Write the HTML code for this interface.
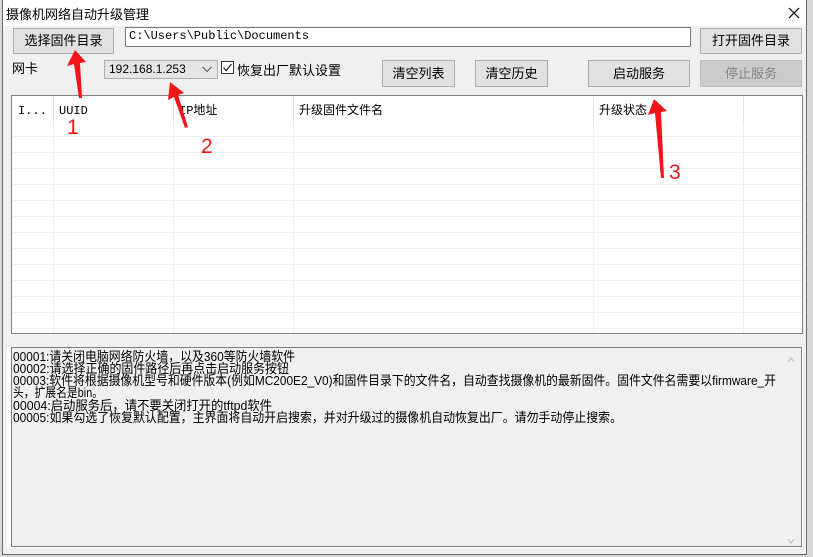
<!DOCTYPE html><html><head><meta charset="utf-8"><style>
body{margin:0;width:813px;height:557px;background:#d8d8d8;position:relative;overflow:hidden;font-family:"Liberation Sans","Noto Sans CJK SC",sans-serif;font-size:12px;color:#000}
.a{position:absolute}
.win{left:2px;top:0;width:805px;height:555px;background:#f0f0f0;border:1px solid #6a6a6a;border-top:none;box-sizing:border-box}
.btn{position:absolute;background:#e1e1e1;border:1px solid #adadad;box-sizing:border-box;text-align:center;font-size:13px;line-height:24px}
.mono{font-family:"Liberation Mono","Noto Sans CJK SC",monospace}
</style></head><body>
<div class="a win"></div>
<div class="a" style="left:3px;top:0;width:803px;height:26px;background:#fff"></div>
<div class="a" style="left:6px;top:4px;font-size:13px">摄像机网络自动升级管理</div>
<svg class="a" style="left:788px;top:7px" width="12" height="12"><path d="M1 1L11 11M11 1L1 11" stroke="#000" stroke-width="1.2"/></svg>
<div class="btn" style="left:13px;top:28px;width:101px;height:26px">选择固件目录</div>
<div class="a mono" style="left:125px;top:27px;width:566px;height:20px;background:#fff;border:1px solid #7a7a7a;box-sizing:border-box;padding-left:3px;line-height:17px;font-size:12px">C:\Users\Public\Documents</div>
<div class="btn" style="left:700px;top:28px;width:102px;height:26px">打开固件目录</div>
<div class="a" style="left:12px;top:58px;font-size:13px">网卡</div>
<div class="a" style="left:104px;top:60px;width:114px;height:19px;background:#e5e5e5;border:1px solid #adadad;box-sizing:border-box;font-size:12px;line-height:17px;padding-left:4px">192.168.1.253</div>
<svg class="a" style="left:202px;top:66px" width="10" height="7"><path d="M0.5 1L5 5.5L9.5 1" stroke="#555" fill="none"/></svg>
<div class="a" style="left:221px;top:61px;width:13px;height:13px;background:#fff;border:1px solid #333;box-sizing:border-box"></div>
<svg class="a" style="left:222px;top:62px" width="11" height="11"><path d="M1.5 5.5L4.2 8.5L9.5 2" stroke="#222" stroke-width="1.3" fill="none"/></svg>
<div class="a" style="left:237px;top:60px;font-size:13px">恢复出厂默认设置</div>
<div class="btn" style="left:382px;top:60px;width:73px;height:27px;line-height:25px">清空列表</div>
<div class="btn" style="left:475px;top:60px;width:73px;height:27px;line-height:25px">清空历史</div>
<div class="btn" style="left:588px;top:60px;width:102px;height:27px;line-height:25px">启动服务</div>
<div class="btn" style="left:700px;top:60px;width:102px;height:27px;line-height:25px;background:#cccccc;border-color:#bfbfbf;color:#838383">停止服务</div>
<svg class="a" style="left:11px;top:95px" width="792" height="239">
<rect x="0.5" y="0.5" width="791" height="238" fill="#fff" stroke="#828282"/>
<g stroke="#f0f0f0">
<path d="M1 41.5H791M1 57.5H791M1 73.5H791M1 89.5H791M1 105.5H791M1 121.5H791M1 137.5H791M1 153.5H791M1 169.5H791M1 185.5H791M1 201.5H791M1 217.5H791M1 233.5H791"/>
<path d="M42.5 28V238M162.5 28V238M282.5 28V238M582.5 28V238M732.5 28V238"/>
</g>
<g stroke="#e5e5e5"><path d="M42.5 1V28M162.5 1V28M282.5 1V28M582.5 1V28M732.5 1V28"/></g>
<g font-size="12" font-family="Liberation Mono,Noto Sans CJK SC,monospace"><text x="7" y="19">I...</text><text x="48" y="19">UUID</text><text x="168" y="19">IP地址</text><text x="288" y="19" font-family="Noto Sans CJK SC">升级固件文件名</text><text x="588" y="19" font-family="Noto Sans CJK SC">升级状态</text></g>
</svg>
<svg class="a" style="left:7px;top:347px" width="796" height="201">
<rect x="0.5" y="0.5" width="795" height="200" fill="#fff" stroke="#fff"/>
<rect x="4.5" y="0.5" width="790" height="199" fill="#f0f0f0" stroke="#7f7f7f"/>
<rect x="775" y="1" width="19" height="198" fill="#f0f0f0"/>
<path d="M781 15l3-4 3 4M781 192l3 4 3-4" stroke="#bbb" fill="none"/>
<g font-size="13" font-family="Liberation Sans Narrow,Liberation Sans,Noto Sans CJK SC,sans-serif">
<text x="6" y="14" textLength="282" lengthAdjust="spacingAndGlyphs">00001:请关闭电脑网络防火墙，以及360等防火墙软件</text>
<text x="6" y="26" textLength="276" lengthAdjust="spacingAndGlyphs">00002:请选择正确的固件路径后再点击启动服务按钮</text>
<text x="6" y="38" textLength="763" lengthAdjust="spacingAndGlyphs">00003:软件将根据摄像机型号和硬件版本(例如MC200E2_V0)和固件目录下的文件名，自动查找摄像机的最新固件。固件文件名需要以firmware_开</text>
<text x="6" y="50" textLength="90" lengthAdjust="spacingAndGlyphs">头，扩展名是bin。</text>
<text x="6" y="63" textLength="259" lengthAdjust="spacingAndGlyphs">00004:启动服务后，请不要关闭打开的tftpd软件</text>
<text x="6" y="75" textLength="609" lengthAdjust="spacingAndGlyphs">00005:如果勾选了恢复默认配置，主界面将自动开启搜索，并对升级过的摄像机自动恢复出厂。请勿手动停止搜索。</text>
</g></svg>
<svg class="a" style="left:0;top:0" width="813" height="557">
<g fill="#f5131a">
<path d="M75 50L67 66L74 64L79 98L82 98L80 63L86 62Z"/>
<path d="M170 82L168 100L174 97L185 128L188 127L178 95L184 93Z"/>
<path d="M654 99L648 115L655 113L661 178L664 178L661 112L667 111Z"/>
</g>
<g fill="#f5131a" font-size="21" font-family="Liberation Sans,sans-serif">
<text x="67" y="134">1</text><text x="201" y="153">2</text><text x="669" y="179">3</text>
</g></svg>
</body></html>
